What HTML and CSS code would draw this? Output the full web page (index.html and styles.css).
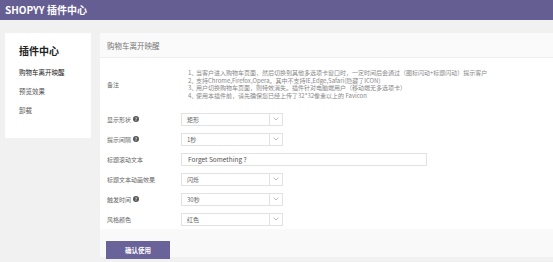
FILE: index.html
```html
<!DOCTYPE html>
<html lang="zh-CN">
<head>
<meta charset="utf-8">
<title>SHOPYY 插件中心</title>
<link rel="stylesheet" href="styles.css">
</head>
<body>
<header class="topbar">SHOPYY 插件中心</header>
<div class="layout">
  <aside class="sidebar">
    <div class="side-title">插件中心</div>
    <ul class="side-menu">
      <li class="active">购物车离开映醒</li>
      <li>预览效果</li>
      <li>卸载</li>
    </ul>
  </aside>
  <main class="card">
    <div class="card-head">购物车离开映醒</div>
    <div class="form">
      <div class="row notes-row">
        <div class="label">备注</div>
        <ol class="notes">
          <li><span class="num">1、</span>当客户进入购物车页面，然后切换到其他多选项卡窗口时，一定时间后会通过（图标闪动+标题闪动）提示客户</li>
          <li><span class="num">2、</span>支持Chrome,Firefox,Opera。其中不支持IE,Edge,Safari(隐藏了ICON)</li>
          <li><span class="num">3、</span>用户切换购物车页面，则特效消失。插件针对电脑端用户（移动端无多选项卡）</li>
          <li><span class="num">4、</span>使用本插件前，请先确保您已经上传了32*32像素以上的 Favicon</li>
        </ol>
      </div>
      <div class="row">
        <div class="label">显示形状<span class="help">?</span></div>
        <div class="select"><span class="val">矩形</span><span class="arrow"><svg width="6" height="4" viewBox="0 0 6 4"><polyline points="0.5,0.5 3,3 5.5,0.5" fill="none" stroke="#aaa" stroke-width="0.8"/></svg></span></div>
      </div>
      <div class="row">
        <div class="label">提示间隔<span class="help">?</span></div>
        <div class="select"><span class="val">1秒</span><span class="arrow"><svg width="6" height="4" viewBox="0 0 6 4"><polyline points="0.5,0.5 3,3 5.5,0.5" fill="none" stroke="#aaa" stroke-width="0.8"/></svg></span></div>
      </div>
      <div class="row">
        <div class="label">标题滚动文本</div>
        <div class="input">Forget Something ?</div>
      </div>
      <div class="row">
        <div class="label">标题文本动画效果</div>
        <div class="select"><span class="val">闪烁</span><span class="arrow"><svg width="6" height="4" viewBox="0 0 6 4"><polyline points="0.5,0.5 3,3 5.5,0.5" fill="none" stroke="#aaa" stroke-width="0.8"/></svg></span></div>
      </div>
      <div class="row">
        <div class="label">触发时间<span class="help">?</span></div>
        <div class="select"><span class="val">30秒</span><span class="arrow"><svg width="6" height="4" viewBox="0 0 6 4"><polyline points="0.5,0.5 3,3 5.5,0.5" fill="none" stroke="#aaa" stroke-width="0.8"/></svg></span></div>
      </div>
      <div class="row">
        <div class="label">风格颜色</div>
        <div class="select"><span class="val">红色</span><span class="arrow"><svg width="6" height="4" viewBox="0 0 6 4"><polyline points="0.5,0.5 3,3 5.5,0.5" fill="none" stroke="#aaa" stroke-width="0.8"/></svg></span></div>
      </div>
    </div>
    <div class="actions">
      <button class="btn">确认使用</button>
    </div>
  </main>
</div>
</body>
</html>
```

FILE: styles.css
```css
* { box-sizing: border-box; }
html, body { margin: 0; padding: 0; }
body {
  background: #f1f1f1;
  font-family: "Noto Sans CJK SC", "Liberation Sans", sans-serif;
  color: #666;
  width: 553px;
  height: 262px;
  overflow: hidden;
}
.topbar {
  height: 20px;
  line-height: 20px;
  background: #645e93;
  color: #fff;
  font-weight: bold;
  font-size: 10px;
  padding-left: 5px;
}
.layout {
  display: flex;
  gap: 9px;
  padding: 13px 0 0 5px;
}
.sidebar {
  width: 86px;
  height: 105px;
  background: #fff;
  padding: 11px 0 0 14px;
}
.side-title {
  font-size: 10px;
  font-weight: bold;
  color: #222;
  line-height: 14px;
  margin-bottom: 5px;
}
.side-menu {
  list-style: none;
  margin: 0;
  padding: 0;
}
.side-menu li {
  font-size: 6.5px;
  line-height: 19px;
  color: #555;
}
.side-menu li.active { color: #222; }
.card {
  flex: 1;
  height: 224px;
  background: #fff;
  display: flex;
  flex-direction: column;
}
.card-head {
  height: 25px;
  line-height: 25px;
  background: #fafafa;
  border-bottom: 1px solid #eee;
  padding-left: 7px;
  font-size: 7.5px;
  color: #777;
}
.form {
  flex: 1;
  display: flex;
  flex-direction: column;
}
.row {
  display: flex;
  align-items: center;
  height: 20px;
}
.notes-row {
  height: auto;
  padding: 11px 0 10px;
}
.label {
  width: 81px;
  padding-left: 7px;
  font-size: 6px;
  color: #666;
  display: flex;
  align-items: center;
}
.help {
  display: inline-flex;
  align-items: center;
  justify-content: center;
  width: 6px;
  height: 6px;
  margin-left: 2px;
  border-radius: 50%;
  background: #555;
  color: #fff;
  font-size: 4.5px;
  font-weight: bold;
  line-height: 1;
}
.notes {
  list-style: none;
  margin: 0;
  padding: 0 0 0 7px;
  font-size: 6px;
  line-height: 7.5px;
  color: #888;
}
.notes .num {
  display: inline-block;
  width: 8px;
}
.select {
  width: 102px;
  height: 13px;
  border: 1px solid #e2e2e2;
  display: flex;
  align-items: stretch;
  font-size: 6px;
  color: #666;
}
.select .val {
  flex: 1;
  padding-left: 5px;
  line-height: 11px;
}
.select .arrow {
  width: 13px;
  border-left: 1px solid #e2e2e2;
  display: flex;
  align-items: center;
  justify-content: center;
}
.input {
  width: 246px;
  height: 13px;
  border: 1px solid #e2e2e2;
  padding-left: 6px;
  font-size: 6.5px;
  line-height: 11px;
  color: #555;
}
.actions {
  height: 28px;
  background: #f9f9f9;
  padding: 5px 0 0 6px;
}
.btn {
  width: 64px;
  height: 18px;
  border: 0;
  background: #6a6399;
  color: #fff;
  font-family: "Noto Sans CJK SC", "Liberation Sans", sans-serif;
  font-size: 6.5px;
  font-weight: bold;
  padding: 0;
}
```
